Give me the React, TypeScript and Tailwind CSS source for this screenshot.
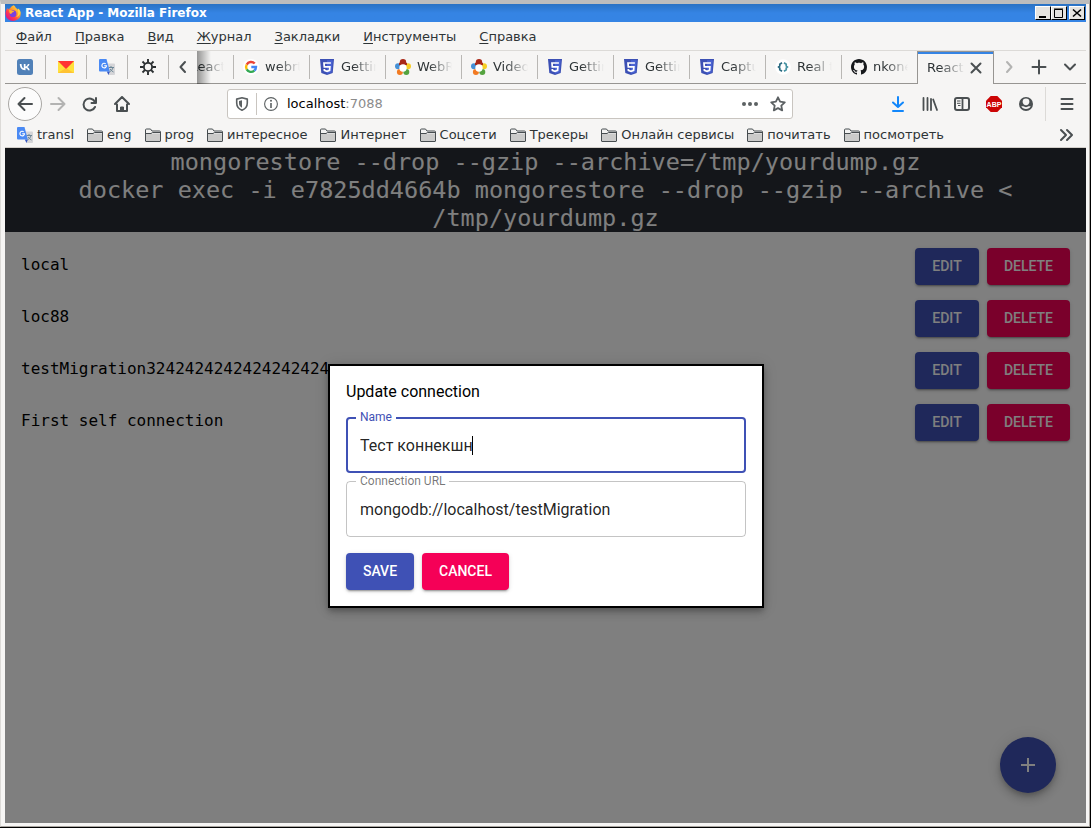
import { useState } from "react";
import type { ReactNode } from "react";

type IconProps = { className?: string };

function FirefoxLogo() {
  return (
    <svg viewBox="0 0 16 16" className="size-4 shrink-0" aria-hidden="true">
      <defs>
        <linearGradient id="fx-body" x1="0.9" y1="0.1" x2="0.2" y2="0.9">
          <stop offset="0" stopColor="#ffe14a" />
          <stop offset="0.4" stopColor="#ff9a2b" />
          <stop offset="0.7" stopColor="#ff3b4e" />
          <stop offset="1" stopColor="#e31587" />
        </linearGradient>
      </defs>
      <path d="M8.6.2c1.2.7 1.9 1.6 2.3 2.7.9.3 1.7 1 2.1 1.8l.2-1.2c1.600 1.300 2.600 3.100 2.600 5.200a7.600 7.200 0 0 1-15.300.1c0-2.100.7-4.200 2-5.700l.4 1.300c.6-.5 1.300-.8 2.100-.8C5.500 2.200 6.600.9 8.600.2z" fill="url(#fx-body)" />
      <circle cx="8" cy="8.700" r="3.400" fill="#7a3fe0" />
      <path d="M4 5.200c1.200-.6 2.500-.3 3.400.6l1.800.3c-.2 1-1.200 1.100-1.800 1.500-.6.400-.5 1.200-1.400 1.300-.8 0-1.300-.5-1.500-1.200z" fill="#ffb12e" />
      <path d="M12.900 5.500c1 2.400.3 5.400-2.300 6.800 1.500-.3 4.300-1.600 4.700-5-.4-1.300-1.100-2.700-2.100-3.600z" fill="#ffd83f" />
    </svg>
  );
}

function VkIcon() {
  return (
    <svg viewBox="0 0 16 16" className="size-4" aria-hidden="true">
      <rect width="16" height="16" rx="2.500" fill="#5181b8" />
      <path d="M8.200 11.200C4.800 11.200 2.900 8.900 2.800 5h1.700c.1 2.900 1.300 4.100 2.300 4.300V5h1.700v2.500c1-.1 2-1.200 2.400-2.500h1.600c-.3 1.500-1.400 2.600-2.200 3.100.8.400 2 1.300 2.500 3.100H11c-.4-1.200-1.300-2.100-2.500-2.200v2.200z" fill="#fff" />
    </svg>
  );
}

function MailIcon() {
  return (
    <svg viewBox="0 0 16 16" className="size-4" aria-hidden="true">
      <path d="M0 2h16v12H0z" fill="#ffc233" />
      <path d="M0 2l8 8.500L16 2v12L8 9 0 14z" fill="#ffe03c" />
      <path d="M0 2h16l-8 8z" fill="#f33" />
    </svg>
  );
}

function TranslateIcon() {
  return (
    <svg viewBox="0 0 16 16" className="size-4 shrink-0" aria-hidden="true">
      <path d="M6 4.500h9a1 1 0 0 1 1 1V15a1 1 0 0 1-1 1H9.500z" fill="#d5d5d8" />
      <path d="M9.500 8.500h5.500M12 7v1.500M14 8.500c-.5 2-1.800 3.500-3.500 4.500M11 10c.8 1.200 2 2.200 3.500 3" stroke="#6c8796" strokeWidth="1" fill="none" />
      <path d="M7.800 12.500h3L9.500 16z" fill="#3454c4" />
      <path d="M1 0h6.500l3.300 12.500H1a1 1 0 0 1-1-1V1a1 1 0 0 1 1-1z" fill="#4a8af4" />
      <path d="M6.700 4.800a2.300 2.300 0 1 0 .8 1.900H5.200" stroke="#fff" strokeWidth="1.100" fill="none" />
    </svg>
  );
}

function GearIcon() {
  return (
    <svg viewBox="0 0 16 16" className="size-4" fill="none" stroke="#2b2f31" aria-hidden="true">
      <circle cx="8" cy="8" r="4.100" strokeWidth="1.800" />
      <path d="M8 0v3.500M8 12.500V16M0 8h3.500M12.500 8H16M2.500 2.500l2.300 2.300M11.200 11.200l2.300 2.300M13.500 2.500l-2.300 2.300M4.800 11.200l-2.300 2.300" strokeWidth="1.900" />
    </svg>
  );
}

function GoogleIcon() {
  return (
    <svg viewBox="0 0 16 16" className="size-4 shrink-0" aria-hidden="true">
      <circle cx="8" cy="8" r="8" fill="#fff" />
      <g fill="none" strokeWidth="2.400">
        <path d="M11.700 4.500A5 5 0 0 0 3.700 5.600" stroke="#ea4335" />
        <path d="M3.700 5.600a5 5 0 0 0 0 4.800" stroke="#fbbc05" />
        <path d="M3.700 10.400a5 5 0 0 0 7.600 1.300" stroke="#34a853" />
        <path d="M11.300 11.700A5 5 0 0 0 13 8H8.300" stroke="#4285f4" />
      </g>
    </svg>
  );
}

function Html5Icon() {
  return (
    <svg viewBox="0 0 16 16" className="size-4 shrink-0" aria-hidden="true">
      <path d="M1 0h14l-1.300 14L8 16l-5.700-2z" fill="#3c50b4" />
      <path d="M8 1.200h5.700l-1.100 12L8 14.800z" fill="#4a63d3" />
      <path d="M11.900 4H5l.3 3.800h5.600l-.3 3.600L8 12.300l-2.600-.9-.1-1.400" fill="none" stroke="#fff" strokeWidth="1.700" />
    </svg>
  );
}

function WebRtcIcon() {
  return (
    <svg viewBox="0 0 16 16" className="size-4 shrink-0" aria-hidden="true">
      <circle cx="3" cy="7.300" r="3" fill="#4590d6" />
      <circle cx="13" cy="7.300" r="3" fill="#f6cd24" />
      <circle cx="4.900" cy="13" r="3" fill="#f27a21" />
      <circle cx="11.300" cy="13" r="3" fill="#55a33f" />
      <circle cx="8" cy="3.200" r="3.200" fill="#a92817" />
      <path d="M4 3.800h8v2.300H4z" fill="#a92817" />
      <circle cx="8" cy="9" r="3.700" fill="#fff" />
    </svg>
  );
}

function CodeIcon() {
  return (
    <svg viewBox="0 0 16 16" className="size-4 shrink-0" aria-hidden="true">
      <circle cx="8" cy="8" r="7.800" fill="#fff" />
      <path d="M7 3.800L4.800 5.300v1.600L3.600 8l1.200 1.100v1.600L7 12.200" fill="none" stroke="#2b6a80" strokeWidth="1.700" />
      <path d="M9 3.800l2.200 1.500v1.600L12.400 8l-1.200 1.100v1.600L9 12.200" fill="none" stroke="#4793a3" strokeWidth="1.700" />
    </svg>
  );
}

function GithubIcon() {
  return (
    <svg viewBox="0 0 16 16" className="size-4 shrink-0" aria-hidden="true">
      <path
        fill="#16181b"
        d="M8 0C3.580 0 0 3.580 0 8c0 3.540 2.290 6.530 5.470 7.590.4.070.55-.17.55-.38 0-.19-.01-.82-.01-1.490-2.010.37-2.530-.49-2.690-.94-.09-.23-.48-.94-.82-1.130-.28-.15-.68-.52-.01-.53.63-.01 1.080.58 1.230.82.72 1.210 1.870.87 2.330.66.070-.52.28-.87.51-1.070-1.780-.2-3.640-.89-3.640-3.950 0-.87.31-1.590.82-2.150-.08-.2-.36-1.020.08-2.120 0 0 .67-.21 2.200.82.64-.18 1.320-.27 2-.27s1.360.09 2 .27c1.530-1.040 2.200-.82 2.200-.82.44 1.100.16 1.920.08 2.120.51.56.82 1.270.82 2.150 0 3.070-1.870 3.750-3.650 3.950.29.25.54.73.54 1.480 0 1.070-.01 1.930-.01 2.200 0 .21.15.46.55.38A8.010 8.010 0 0 0 16 8c0-4.420-3.580-8-8-8z"
      />
    </svg>
  );
}

function FolderIcon() {
  return (
    <svg viewBox="0 0 16 16" className="size-4 shrink-0" aria-hidden="true">
      <path d="M.5 14V3a1 1 0 0 1 1-1h4l1.500 2h7.500a1 1 0 0 1 1 1v9a.5.5 0 0 1-.5.500H1a.5.500 0 0 1-.5-.500z" fill="#f2f2f1" stroke="#474d50" />
      <path d="M1 6.500h14V14H1z" fill="#cbcbca" />
      <path d="M1 6.500h5l1.500-1H15" fill="none" stroke="#474d50" />
    </svg>
  );
}

function Stroke({ d, className = "size-4 text-[#4a4f51]", width = 2 }: IconProps & { d: string; width?: number }) {
  return (
    <svg viewBox="0 0 16 16" className={className} fill="none" stroke="currentColor" strokeWidth={width} strokeLinecap="round" strokeLinejoin="round" aria-hidden="true">
      <path d={d} />
    </svg>
  );
}

function HomeIcon() {
  return (
    <svg viewBox="0 0 16 16" className="size-4 text-[#4a4f51]" fill="none" stroke="currentColor" strokeWidth="2" strokeLinecap="round" strokeLinejoin="round" aria-hidden="true">
      <path d="M1 8l7-7 7 7M3 8.500V15h10V8.500" />
      <path d="M6.500 15v-4h3v4z" fill="currentColor" strokeWidth="1" />
    </svg>
  );
}

function ShieldIcon() {
  return (
    <svg viewBox="0 0 16 16" className="size-4" aria-hidden="true">
      <path d="M8 1.800l5.300 1.300V7c0 3.500-1.800 5.800-5.300 7.300C4.500 12.800 2.700 10.500 2.700 7V3.100z" fill="none" stroke="#5c6163" strokeWidth="1.600" strokeLinejoin="round" />
      <path d="M8 4.200v7.600C5.800 10.600 5 9 5 7V5z" fill="#5c6163" />
    </svg>
  );
}

function InfoIcon() {
  return (
    <svg viewBox="0 0 16 16" className="size-4" aria-hidden="true">
      <circle cx="8" cy="8" r="6.400" fill="none" stroke="#5c6163" strokeWidth="1.100" />
      <path d="M7.200 7h1.600v5H7.200z" fill="#5c6163" />
      <circle cx="8" cy="4.800" r="1" fill="#5c6163" />
    </svg>
  );
}

function DotsIcon() {
  return (
    <svg viewBox="0 0 16 16" className="size-4 text-[#5c6163]" fill="currentColor" aria-hidden="true">
      <circle cx="2" cy="8" r="2" />
      <circle cx="8" cy="8" r="2" />
      <circle cx="14" cy="8" r="2" />
    </svg>
  );
}

function LibraryIcon() {
  return (
    <svg viewBox="0 0 16 16" className="size-4 text-[#4a4f51]" fill="none" stroke="currentColor" strokeWidth="1.800" strokeLinecap="round" aria-hidden="true">
      <path d="M1.500 2v12M5.500 2v12M9 3v11M11.200 3.500L15 14" />
    </svg>
  );
}

function SidebarIcon() {
  return (
    <svg viewBox="0 0 16 16" className="size-4 text-[#4a4f51]" fill="none" stroke="currentColor" aria-hidden="true">
      <rect x="1" y="2" width="14" height="12" rx="2" strokeWidth="2" />
      <path d="M8.500 2v12" strokeWidth="1.800" />
      <path d="M3 5h3.500M3 7.300h3.500M4 9.500h2.500" />
    </svg>
  );
}

function AdblockIcon() {
  return (
    <svg viewBox="0 0 16 16" className="size-4" aria-hidden="true">
      <path d="M4.700 0h6.600L16 4.700v6.600L11.300 16H4.700L0 11.300V4.700z" fill="#cc0505" />
      <text x="8" y="10.800" textAnchor="middle" fontFamily="Liberation Sans" fontWeight="700" fontSize="7" fill="#fff">
        ABP
      </text>
    </svg>
  );
}

function AccountIcon() {
  return (
    <svg viewBox="0 0 16 16" className="size-4" aria-hidden="true">
      <circle cx="8" cy="8" r="7" fill="#4a4f51" />
      <path d="M4.600 5.800a3.400 3.400 0 0 1 6.800 0c0 1.900-1.500 3.400-3.400 3.400S4.600 7.700 4.600 5.800z" fill="#f6f5f4" />
      <path d="M3.300 10.300h2c1.600 1.100 3.800 1.100 5.400 0h2C11.900 12.100 10.100 13 8 13s-3.900-.9-4.700-2.700z" fill="#f6f5f4" />
    </svg>
  );
}

function IconButton({ label, children, className = "h-8 w-8" }: { label: string; children: ReactNode; className?: string }) {
  return (
    <button type="button" aria-label={label} className={`flex shrink-0 items-center justify-center ${className}`}>
      {children}
    </button>
  );
}

const controlBevel =
  "flex h-3.5 w-4 items-center justify-center border border-t-white border-l-white border-r-black border-b-black bg-[#e6e4e0]";

function TitleBar() {
  return (
    <header className="flex h-[18px] items-center bg-linear-to-b from-[#2a72c4] to-[#3584e4] to-50% pr-px">
      <FirefoxLogo />
      <h1 className="ml-1 flex-1 text-[12px] leading-[18px] font-bold text-white">React App - Mozilla Firefox</h1>
      <button type="button" aria-label="Свернуть" className={controlBevel}>
        <svg viewBox="0 0 12 12" className="size-3" aria-hidden="true">
          <path d="M2 9h7v2H2z" />
        </svg>
      </button>
      <button type="button" aria-label="Развернуть" className={controlBevel}>
        <svg viewBox="0 0 12 12" className="size-3" fill="none" stroke="#000" aria-hidden="true">
          <path d="M1.500 2.500h8v8h-8zM1 2h9" />
        </svg>
      </button>
      <button type="button" aria-label="Закрыть" className={`ml-[2px] ${controlBevel}`}>
        <svg viewBox="0 0 12 12" className="size-3" fill="none" stroke="#000" strokeWidth="1.600" aria-hidden="true">
          <path d="M2 2.500l8 7M10 2.500l-8 7" />
        </svg>
      </button>
    </header>
  );
}

const menus = ["Файл", "Правка", "Вид", "Журнал", "Закладки", "Инструменты", "Справка"];

function MenuBar() {
  return (
    <nav className="flex h-[29px] items-center gap-[23px] border-b border-[#dcdad7] px-[11px] pt-0.5 text-[13px]">
      {menus.map((menu) => (
        <button key={menu} type="button">
          <span className="underline underline-offset-2">{menu[0]}</span>
          {menu.slice(1)}
        </button>
      ))}
    </nav>
  );
}

const pinned = [
  { name: "VK", icon: <VkIcon /> },
  { name: "Почта", icon: <MailIcon /> },
  { name: "Переводчик", icon: <TranslateIcon /> },
  { name: "Настройки", icon: <GearIcon /> },
];

const tabs = [
  { title: "React App", icon: <Html5Icon /> },
  { title: "webrtc", icon: <GoogleIcon /> },
  { title: "Getting", icon: <Html5Icon /> },
  { title: "WebRTC", icon: <WebRtcIcon /> },
  { title: "Video", icon: <WebRtcIcon /> },
  { title: "Getting", icon: <Html5Icon /> },
  { title: "Getting", icon: <Html5Icon /> },
  { title: "Capture", icon: <Html5Icon /> },
  { title: "Real time", icon: <CodeIcon /> },
  { title: "nkonev", icon: <GithubIcon /> },
];

const fade = "overflow-hidden whitespace-nowrap mask-linear-90 mask-linear-from-35% mask-linear-to-100%";

function TabStrip() {
  return (
    <div className="flex h-[33px] text-[13px]">
      <div className="flex border-b border-[#979592]">
        {pinned.map((tab) => (
          <button key={tab.name} type="button" aria-label={tab.name} className="flex w-[41px] items-center">
            <span className="flex flex-1 justify-center">{tab.icon}</span>
            <span className="h-6 w-px bg-[#b9b7b4]" />
          </button>
        ))}
        <IconButton label="Прокрутить влево" className="w-7">
          <Stroke d="M10 3L5.500 8 10 13" />
        </IconButton>
      </div>
      <div className="relative flex min-w-0 flex-1 justify-end overflow-hidden">
        {tabs.map((tab, index) => (
          <button key={index} type="button" className="flex w-[76px] shrink-0 items-center border-b border-[#979592]">
            <span className="h-6 w-px bg-[#b9b7b4]" />
            <span className="ml-[9px]">{tab.icon}</span>
            <span className={`ml-1.5 w-[35px] text-left ${fade}`}>{tab.title}</span>
          </button>
        ))}
        <div className="flex w-[77px] shrink-0 items-center border-x border-t border-[#979592] shadow-[inset_0_2px_0_#3584e4]">
          <button type="button" className={`ml-[9px] w-[38px] text-left ${fade}`}>
            React App
          </button>
          <IconButton label="Закрыть вкладку" className="ml-[3px] size-4">
            <Stroke d="M3.500 3.500l9 9M12.500 3.500l-9 9" />
          </IconButton>
        </div>
        <div className="pointer-events-none absolute inset-y-0 left-0 w-3.5 bg-linear-to-r from-black/40 to-transparent" />
      </div>
      <div className="flex border-b border-[#979592]">
        <IconButton label="Прокрутить вправо" className="w-[30px]">
          <Stroke d="M6 3l4.500 5L6 13" className="size-4 text-[#b3b3b2]" />
        </IconButton>
        <IconButton label="Новая вкладка" className="w-[30px]">
          <Stroke d="M8 1.500v13M1.500 8h13" />
        </IconButton>
        <IconButton label="Все вкладки" className="w-8">
          <Stroke d="M3 5.500l5 5 5-5" />
        </IconButton>
      </div>
    </div>
  );
}

function NavBar() {
  return (
    <div className="flex h-10 items-center px-[3px]">
      <IconButton label="Назад" className="size-[34px] rounded-full border border-[#a9a7a4] bg-[#fcfcfc]">
        <Stroke d="M15 8H1.500M7.500 2L1.500 8l6 6" />
      </IconButton>
      <IconButton label="Вперёд">
        <Stroke d="M1 8h13.500M8.500 2l6 6-6 6" className="size-4 text-[#b3b3b2]" />
      </IconButton>
      <IconButton label="Обновить">
        <Stroke d="M14 7h-4.500M14 2v5M13 6A6 6 0 1 0 13 11" />
      </IconButton>
      <IconButton label="Домой">
        <HomeIcon />
      </IconButton>
      <div className="w-[89px] shrink" />
      <div className="flex h-[30px] min-w-0 flex-1 items-center rounded-[3px] border border-[#c9c5c0] bg-white px-1.5">
        <ShieldIcon />
        <span className="ml-1.5 h-[22px] w-px bg-[#c9c5c0]" />
        <span className="ml-1.5">
          <InfoIcon />
        </span>
        <a href="http://localhost:7088" className="ml-2 flex-1 text-[13px] text-[#8b8b8b]">
          <span className="text-black">localhost</span>:7088
        </a>
        <DotsIcon />
        <span className="ml-3">
          <Stroke d="M8 1.300l2.100 4.400 4.700.6-3.500 3.300.9 4.800L8 12.100l-4.200 2.300.9-4.800L1.200 6.300l4.700-.6z" width={1.8} className="size-4 text-[#5c6163]" />
        </span>
      </div>
      <div className="w-[89px] shrink" />
      <IconButton label="Загрузки">
        <Stroke d="M8 1v9.500M3 6.500l5 4.500 5-4.500M3 15h10" className="size-4 text-[#1287fb]" />
      </IconButton>
      <IconButton label="Библиотека">
        <LibraryIcon />
      </IconButton>
      <IconButton label="Боковая панель">
        <SidebarIcon />
      </IconButton>
      <IconButton label="Adblock Plus">
        <AdblockIcon />
      </IconButton>
      <IconButton label="Аккаунт">
        <AccountIcon />
      </IconButton>
      <span className="mr-[5px] ml-[3px] h-[34px] w-px bg-[#dcdad7]" />
      <IconButton label="Меню">
        <Stroke d="M2.500 3h11M2.500 8h11M2.500 13h11" />
      </IconButton>
    </div>
  );
}

const bookmarks = ["transl", "eng", "prog", "интересное", "Интернет", "Соцсети", "Трекеры", "Онлайн сервисы", "почитать", "посмотреть"];

function BookmarksBar() {
  return (
    <div className="flex h-6 items-center border-b border-[#d3cfca] px-3 pb-px text-[13px]">
      <ul className="flex flex-1 gap-[13px]">
        {bookmarks.map((name, index) => (
          <li key={name}>
            <a href="#" className="flex items-center gap-1 whitespace-nowrap">
              {index === 0 ? <TranslateIcon /> : <FolderIcon />}
              {name}
            </a>
          </li>
        ))}
      </ul>
      <IconButton label="Ещё закладки" className="size-4">
        <Stroke d="M3 3l5 5-5 5M9 3l5 5-5 5" />
      </IconButton>
    </div>
  );
}

const buttonBase =
  "h-[37px] rounded-[4px] text-[14px] font-medium text-white uppercase shadow-[0_3px_1px_-2px_rgba(0,0,0,0.2),0_2px_2px_0_rgba(0,0,0,0.14),0_1px_5px_0_rgba(0,0,0,0.12)]";

const connections = ["local", "loc88", "testMigration3242424242424242424", "First self connection"];

function ConnectionList() {
  return (
    <ul className="flex flex-col gap-[15px] p-4">
      {connections.map((name) => (
        <li key={name} className="flex items-start gap-2">
          <span className="min-w-0 flex-1 pt-[5px] font-['DejaVu_Sans_Mono',monospace] text-[16px] leading-6 text-black">{name}</span>
          <button type="button" className={`w-16 bg-[#3f51b5] font-['Roboto',sans-serif] ${buttonBase}`}>
            Edit
          </button>
          <button type="button" className={`w-[83px] bg-[#f50057] font-['Roboto',sans-serif] ${buttonBase}`}>
            Delete
          </button>
        </li>
      ))}
    </ul>
  );
}

function UpdateDialog() {
  const [name, setName] = useState("Тест коннекшн");
  const [url, setUrl] = useState("mongodb://localhost/testMigration");
  return (
    <div className="absolute inset-0 flex items-center justify-center bg-black/50 pl-px">
      <form
        role="dialog"
        aria-labelledby="dialog-title"
        className="w-full max-w-[436px] border-2 border-black bg-white p-4 font-['Roboto',sans-serif] text-[16px] shadow-[0_3px_5px_-1px_rgba(0,0,0,0.2),0_5px_8px_0_rgba(0,0,0,0.14),0_1px_14px_0_rgba(0,0,0,0.12)]"
      >
        <h2 id="dialog-title" className="mb-4 leading-[19px] text-black">
          Update connection
        </h2>
        <div className="relative">
          <label htmlFor="name" className="absolute -top-2 left-2.5 bg-white px-1 text-[12px] leading-4 text-[#3f51b5]">
            Name
          </label>
          <input
            id="name"
            value={name}
            onChange={(event) => setName(event.target.value)}
            className="h-14 w-full rounded-[4px] border-2 border-[#3f51b5] px-3 pt-0.5 text-black/87 caret-transparent outline-none"
          />
          <span className="absolute top-[19px] left-[126px] h-[19px] w-px bg-black" />
        </div>
        <div className="relative mt-2">
          <label htmlFor="url" className="absolute -top-2 left-2.5 bg-white px-1 text-[12px] leading-4 text-black/54">
            Connection URL
          </label>
          <input
            id="url"
            value={url}
            onChange={(event) => setUrl(event.target.value)}
            className="h-14 w-full rounded-[4px] border border-black/23 px-[13px] pt-0.5 text-black/87 outline-none"
          />
        </div>
        <div className="mt-4 flex gap-2">
          <button type="button" className={`w-[68px] bg-[#3f51b5] ${buttonBase}`}>
            Save
          </button>
          <button type="button" className={`w-[87px] bg-[#f50057] ${buttonBase}`}>
            Cancel
          </button>
        </div>
      </form>
    </div>
  );
}

function Page() {
  return (
    <main className="relative min-h-0 flex-1 overflow-hidden bg-white [container-type:size]">
      <div className="bg-[#282c34] text-center font-['DejaVu_Sans_Mono',monospace] text-[calc(10px+2cqmin)] leading-7 text-white">
        <p>mongorestore --drop --gzip --archive=/tmp/yourdump.gz</p>
        <p>docker exec -i e7825dd4664b mongorestore --drop --gzip --archive &lt; /tmp/yourdump.gz</p>
      </div>
      <ConnectionList />
      <button
        type="button"
        aria-label="Add connection"
        className="absolute right-[30px] bottom-[30px] flex size-14 items-center justify-center rounded-full bg-[#3f51b5] shadow-[0_3px_5px_-1px_rgba(0,0,0,0.2),0_6px_10px_0_rgba(0,0,0,0.14),0_1px_18px_0_rgba(0,0,0,0.12)]"
      >
        <svg viewBox="0 0 24 24" className="size-6" fill="#fff" aria-hidden="true">
          <path d="M19 13h-6v6h-2v-6H5v-2h6V5h2v6h6v2z" />
        </svg>
      </button>
      <UpdateDialog />
    </main>
  );
}

export default function App() {
  return (
    <div className="h-screen border-r border-b border-black">
      <div className="flex h-full flex-col border border-t-4 border-t-[#bdbdbd] border-r-[#a8a49f] border-b-[#a8a49f] border-l-[#dcdad7] bg-[#f6f5f4] pr-[3px] pb-[3px] pl-1 font-['DejaVu_Sans',sans-serif] text-[#2e3436]">
        <TitleBar />
        <MenuBar />
        <TabStrip />
        <NavBar />
        <BookmarksBar />
        <Page />
      </div>
    </div>
  );
}
